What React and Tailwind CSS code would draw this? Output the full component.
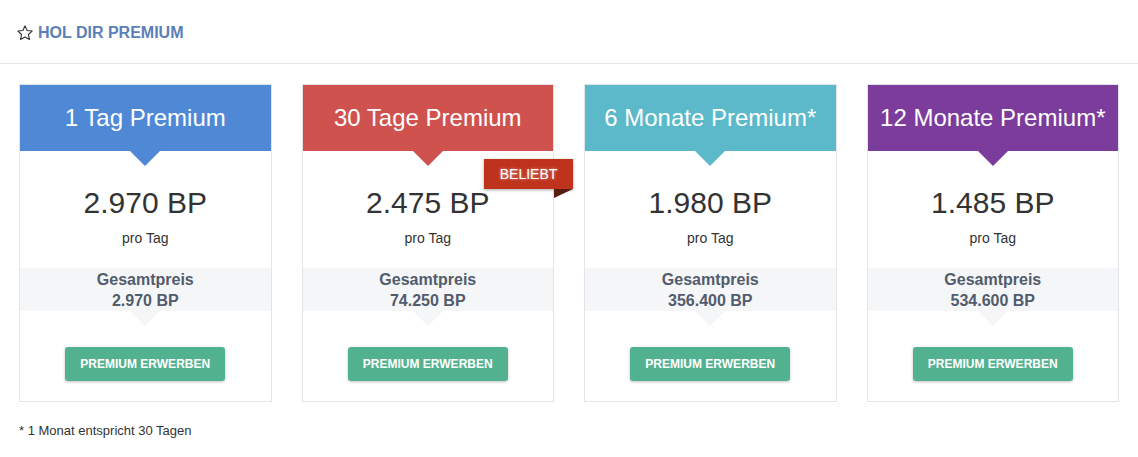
const plans = [
  { title: '1 Tag Premium', color: 'bg-[#4f89d6]', tri: 'border-t-[#4f89d6]', price: '2.970 BP', total: '2.970 BP' },
  { title: '30 Tage Premium', color: 'bg-[#d0524f]', tri: 'border-t-[#d0524f]', price: '2.475 BP', total: '74.250 BP', popular: true },
  { title: '6 Monate Premium*', color: 'bg-[#5bb9ca]', tri: 'border-t-[#5bb9ca]', price: '1.980 BP', total: '356.400 BP' },
  { title: '12 Monate Premium*', color: 'bg-[#7b3c9c]', tri: 'border-t-[#7b3c9c]', price: '1.485 BP', total: '534.600 BP' },
]

function Star() {
  return (
    <svg width="18" height="18" viewBox="0 0 24 24" fill="none" stroke="#333" strokeWidth="1.5" strokeLinejoin="round">
      <path d="M12 2.5l2.9 6.1 6.6.8-4.9 4.6 1.3 6.6L12 17.3l-5.9 3.3 1.3-6.6-4.9-4.6 6.6-.8z" />
    </svg>
  )
}

function Card({ plan }) {
  return (
    <div className="relative border border-[#e2e4e9] bg-white h-[318px] flex flex-col items-center">
      <div className={`relative w-full h-[66px] flex items-center justify-center ${plan.color}`}>
        <span className="text-white text-[24px]">{plan.title}</span>
        <div className={`absolute left-1/2 -translate-x-1/2 top-full w-0 h-0 border-l-[15px] border-r-[15px] border-t-[15px] border-l-transparent border-r-transparent ${plan.tri}`} />
      </div>
      {plan.popular && (
        <div className="absolute top-[74px] right-[-20px] z-10">
          <div className="w-[89px] h-[30px] bg-[#bf331c] text-white text-[14px] flex items-center justify-center shadow-[0_1px_3px_rgba(0,0,0,0.35)] [text-shadow:0_0_3px_rgba(255,255,255,0.6)]">
            BELIEBT
          </div>
          <div className="absolute right-0 top-full w-0 h-0 border-t-[9px] border-t-[#5a1b10] border-r-[19px] border-r-transparent" />
        </div>
      )}
      <div className="mt-[34px] text-[30px] leading-[36px] text-[#333]">{plan.price}</div>
      <div className="mt-[7px] text-[14px] leading-[20px] text-[#333]">pro Tag</div>
      <div className="relative mt-[20px] w-full h-[43px] bg-[#f5f6f8] flex flex-col items-center justify-center font-bold text-[16px] leading-[21px] text-[#525c6d]">
        <div>Gesamtpreis</div>
        <div>{plan.total}</div>
        <div className="absolute left-1/2 -translate-x-1/2 top-full w-0 h-0 border-l-[15px] border-r-[15px] border-t-[15px] border-l-transparent border-r-transparent border-t-[#f5f6f8]" />
      </div>
      <button className="mt-[36px] w-[160px] h-[34px] rounded-[3px] bg-[#52b290] text-white font-bold text-[12px] shadow-[0_1px_3px_rgba(0,0,0,0.25)]">
        PREMIUM ERWERBEN
      </button>
    </div>
  )
}

export default function App() {
  return (
    <div className="w-[1138px] h-[457px] bg-white font-['Liberation_Sans',Arial,sans-serif]">
      <div className="h-[64px] border-b border-[#e8e8e8] flex items-center gap-[4px] pl-[16px] pt-[3px]">
        <Star />
        <span className="text-[16px] font-bold text-[#5a7fb9]">HOL DIR PREMIUM</span>
      </div>
      <div className="grid grid-cols-4 gap-[30px] px-[19px] pt-[20px]">
        {plans.map(p => <Card key={p.title} plan={p} />)}
      </div>
      <div className="mt-[20px] pl-[19px] text-[13px] leading-[18px] text-[#333]">* 1 Monat entspricht 30 Tagen</div>
    </div>
  )
}
